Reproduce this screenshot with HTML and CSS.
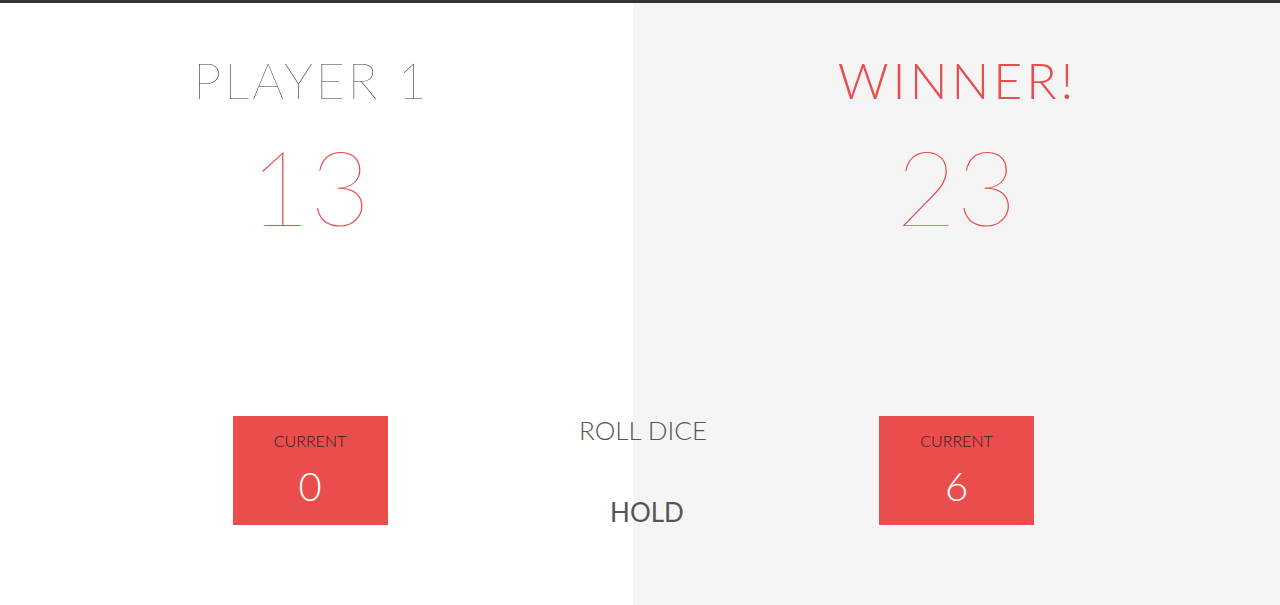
FILE: index.html
```html
<!DOCTYPE html>
<html>
<head>
<meta charset="utf-8">
<link rel="stylesheet" href="styles.css">
</head>
<body>
<div class="wrapper">
  <section class="panel panel-left">
    <div class="player-name">Player 1</div>
    <div class="player-score">13</div>
    <div class="current-box">
      <div class="current-label">Current</div>
      <div class="current-score">0</div>
    </div>
  </section>
  <section class="panel panel-right winner">
    <div class="player-name">Winner!</div>
    <div class="player-score">23</div>
    <div class="current-box">
      <div class="current-label">Current</div>
      <div class="current-score">6</div>
    </div>
  </section>
  <div class="controls">
    <button class="btn btn-roll">Roll dice</button>
    <button class="btn btn-hold">Hold</button>
  </div>
</div>
</body>
</html>
```
FILE: styles.css
```css
html, body {
  margin: 0;
  padding: 0;
  height: 100%;
}
body {
  font-family: Lato, "Open Sans", sans-serif;
  background: #fff;
  overflow: hidden;
}
.wrapper {
  position: relative;
  display: grid;
  grid-template-columns: 633px 1fr;
  border-top: 3px solid #333;
  height: 602px;
}
.panel {
  display: flex;
  flex-direction: column;
  align-items: center;
  padding-top: 52px;
  box-sizing: border-box;
}
.panel-left {
  padding-right: 13px;
  background: #fff;
}
.panel-right {
  background: #f5f5f5;
}
.player-name {
  font-size: 50px;
  line-height: 1;
  font-weight: 100;
  text-transform: uppercase;
  letter-spacing: 3px;
  color: #333;
  margin-right: -3px;
}
.winner .player-name {
  font-weight: 300;
  letter-spacing: 4px;
  margin-right: -2px;
  color: #e84e4e;
}
.player-score {
  font-size: 104px;
  line-height: 1;
  font-weight: 100;
  color: #eb4d4d;
  margin-top: 29px;
}
.current-box {
  margin-top: 178px;
  width: 155px;
  height: 109px;
  box-sizing: border-box;
  padding-top: 17px;
  background: #eb4d4d;
  text-align: center;
}
.current-label {
  font-size: 16px;
  line-height: 1;
  font-weight: 300;
  text-transform: uppercase;
  color: #222;
}
.current-score {
  margin-top: 17px;
  font-size: 40px;
  line-height: 1;
  font-weight: 300;
  color: #fff;
}
.controls {
  position: absolute;
  left: 545px;
  top: 414px;
  width: 200px;
  display: flex;
  flex-direction: column;
  align-items: center;
  gap: 56px;
}
.btn {
  background: none;
  border: none;
  padding: 0;
  font-family: Lato, sans-serif;
  font-size: 26px;
  line-height: 1;
  text-transform: uppercase;
  color: #555;
  cursor: pointer;
}
.btn-roll {
  font-weight: 300;
  margin-left: -4px;
}
.btn-hold {
  font-weight: 400;
  margin-left: 4px;
}
```
